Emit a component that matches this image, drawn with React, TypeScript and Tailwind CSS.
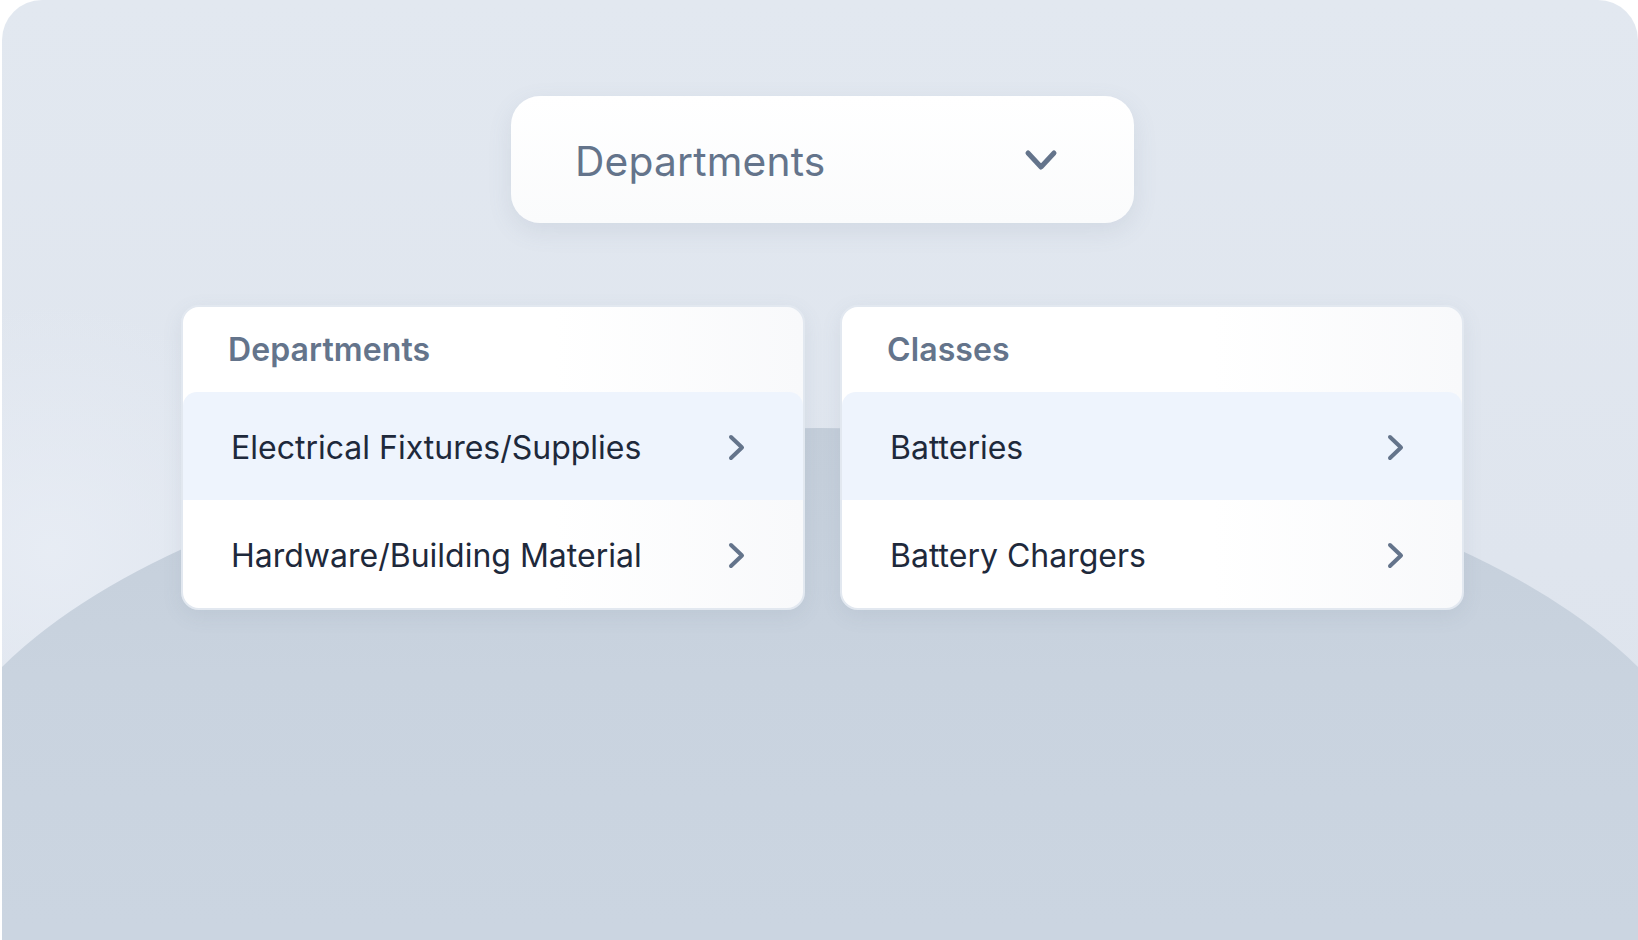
import { ReactNode } from "react";

type Item = { label: string; active?: boolean };

const departments: Item[] = [
  { label: "Electrical Fixtures/Supplies", active: true },
  { label: "Hardware/Building Material" },
];

const classes: Item[] = [
  { label: "Batteries", active: true },
  { label: "Battery Chargers" },
];

function ChevronDown() {
  return (
    <svg width="34" height="24" viewBox="0 0 34 24" fill="none">
      <path
        d="M4 5 L17 19 L30 5"
        stroke="#64748b"
        strokeWidth="5"
        strokeLinecap="round"
        strokeLinejoin="round"
      />
    </svg>
  );
}

function ChevronRight() {
  return (
    <svg width="18" height="28" viewBox="0 0 18 28" fill="none">
      <path
        d="M3 3 L14 13.5 L3 24"
        stroke="#64748b"
        strokeWidth="4"
        strokeLinecap="round"
        strokeLinejoin="round"
      />
    </svg>
  );
}

function ListCard({ title, items }: { title: string; items: Item[] }) {
  return (
    <div className="w-[624px] rounded-[18px] border-2 border-[#e2e8f0] bg-[linear-gradient(90deg,#ffffff_60%,#f8f9fb)] overflow-hidden shadow-[0_6px_20px_rgba(100,116,139,0.10)] flex flex-col">
      {/* header */}
      <div className="h-[85px] shrink-0 flex items-center pl-[45px]">
        <span className="text-[32px] font-semibold text-[#64748b] tracking-[0.1px]">{title}</span>
      </div>

      {/* rows */}
      {items.map((item) => (
        <Row key={item.label} active={item.active}>
          {item.label}
        </Row>
      ))}
    </div>
  );
}

function Row({ active, children }: { active?: boolean; children: ReactNode }) {
  return (
    <div
      className={
        active
          ? "h-[108px] shrink-0 flex items-center justify-between pl-[48px] pr-[57px] pt-[3px] bg-[#eef4fd] rounded-t-[14px]"
          : "h-[108px] shrink-0 flex items-center justify-between pl-[48px] pr-[57px] pt-[3px]"
      }
    >
      <span className="text-[32px] text-[#1e293b]">{children}</span>
      <ChevronRight />
    </div>
  );
}

export default function App() {
  return (
    <div className="w-full h-[940px] bg-white pl-[2px] overflow-hidden" style={{ fontFamily: "Inter, 'Noto Sans', sans-serif" }}>
      <div className="relative h-full rounded-t-[40px] overflow-hidden bg-[linear-gradient(180deg,#e2e8f0,#dfe5ee_60%,#dde3ec)]">
        {/* soft glow */}
        <div className="absolute left-[-200px] top-[300px] w-[500px] h-[500px] rounded-full bg-[radial-gradient(circle,rgba(232,237,245,0.9),rgba(232,237,245,0)_70%)]" />
        {/* big arc */}
        <div className="absolute left-[-84px] top-[428px] w-[1804px] h-[826px] rounded-[50%] bg-[linear-gradient(180deg,#c4ceda,#c9d3df_30%,#cbd5e1_60%)]" />

        <div className="relative flex flex-col items-center pt-[96px] pl-[5px]">
          {/* dropdown */}
          <div className="w-[623px] h-[127px] rounded-[29px] bg-[linear-gradient(180deg,#ffffff,#fafbfc)] shadow-[0_8px_24px_rgba(100,116,139,0.12)] flex items-center justify-between pl-[64px] pr-[76px]">
            <span className="text-[40.7px] text-[#64748b] tracking-[0.2px] pt-[4px]">Departments</span>
            <ChevronDown />
          </div>

          <div className="mt-[82px] flex gap-[35px]">
            <ListCard title="Departments" items={departments} />
            <ListCard title="Classes" items={classes} />
          </div>
        </div>
      </div>
    </div>
  );
}
